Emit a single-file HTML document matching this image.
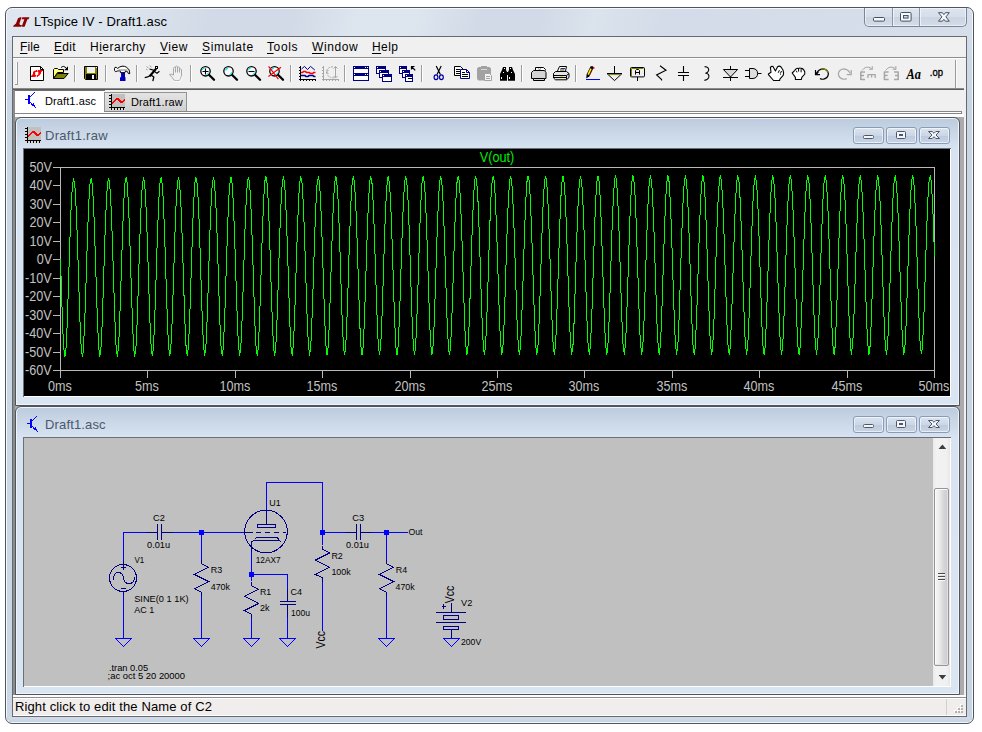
<!DOCTYPE html>
<html lang="en">
<head>
<meta charset="utf-8">
<title>LTspice IV - Draft1.asc</title>
<style>
html,body{margin:0;padding:0;background:#fff;}
body{width:982px;height:732px;overflow:hidden;position:relative;font-family:"Liberation Sans",sans-serif;font-size:12px;color:#000;}
.a{position:absolute;}
.t{position:absolute;white-space:nowrap;line-height:1;}
#win{left:5px;top:7px;width:967px;height:715px;border:1px solid #4f565f;border-radius:7px;
 background:linear-gradient(105deg,#dfe6ef 0,#dce4ee 120px,#d1dae6 200px,#d1dae6 280px,#dde5ef 340px,#dde5ef 400px,#d1dae6 460px,#d1dae6 520px,#dbe3ed 570px,#d3dce8 640px,#d6dfea 100%);
 box-shadow:inset 0 0 0 1px #f4f8fc;}
#client{left:12px;top:36px;width:953px;height:679px;border:1px solid #646a72;background:#f0f0f0;}
.menu span{position:absolute;top:40px;font-size:12px;line-height:14px;white-space:nowrap;}
.menu u{text-decoration:underline;text-decoration-thickness:1px;text-underline-offset:1.5px;}
.sep{position:absolute;width:1px;background:#a0a0a0;top:64px;height:20px;box-shadow:1px 0 0 #fff;}
.child{border:1px solid #50555c;border-radius:6px 6px 0 0;background:linear-gradient(#bccbdd 0,#c7d5e5 12px,#d7e3f1 30px,#dae5f2 100%);box-shadow:inset 0 0 0 1px #eef4fb;}
.cbtn{position:absolute;width:29px;height:15px;border:1px solid #8a9bb8;border-radius:3px;background:linear-gradient(#dbe4f0 0,#cbd6e6 50%,#bccade 51%,#c8d4e5 100%);box-shadow:inset 0 0 0 1px rgba(255,255,255,.6);}
.pl{font-size:14px;color:#c2c2c2;}
.sch text{font-family:"Liberation Sans",sans-serif;font-size:9.3px;fill:#000;}
</style>
</head>
<body>
<div id="win" class="a"></div>
<!-- title -->
<svg class="a" style="left:12px;top:16px" width="18" height="12" viewBox="12 16 18 12"><path d="M13 26.8L13.6 25.6L16 23.6L18 18.2L20.2 17.2H21.6L19.4 23.4L20 25H22L21 26.8ZM22.4 17.2H29.4L28.6 19.2H27.4L24.6 26.8H21.6L24.4 19.2H21.6Z" fill="#8b0000"/></svg>
<div class="t" id="title" style="left:34px;top:14px;font-size:13px;letter-spacing:0.15px;line-height:15px;">LTspice IV - Draft1.asc</div>
<!-- caption buttons -->
<div class="a" style="left:864px;top:8px;width:101px;height:18px;border:1px solid #7b8595;border-top:none;border-radius:0 0 5px 5px;background:linear-gradient(#dde5ef 0,#d5dee9 50%,#cbd5e2 51%,#d3dce8 100%);box-shadow:inset 0 0 0 1px rgba(255,255,255,.55);"></div>
<div class="a" style="left:892px;top:8px;width:1px;height:18px;background:#8c96a6;box-shadow:1px 0 0 rgba(255,255,255,.6)"></div>
<div class="a" style="left:919px;top:8px;width:1px;height:18px;background:#8c96a6;box-shadow:1px 0 0 rgba(255,255,255,.6)"></div>
<svg class="a" style="left:864px;top:8px" width="103" height="19" viewBox="864 8 103 19">
<rect x="873.5" y="17.5" width="11" height="3.6" rx="1" fill="#f6f8fb" stroke="#47505f"/>
<rect x="900.5" y="12.5" width="10.6" height="8.6" rx="1" fill="#f6f8fb" stroke="#47505f"/>
<rect x="903.5" y="15.5" width="4.6" height="2.6" fill="#cfd8e4" stroke="#47505f"/>
<path d="M938.5 12.7H942.4L943.9 14.6L945.4 12.7H949.3L945.9 16.9L949.3 21.2H945.4L943.9 19.3L942.4 21.2H938.5L941.9 16.9Z" fill="#f6f8fb" stroke="#47505f" stroke-linejoin="round"/>
</svg>
<div class="a" style="left:7px;top:40px;width:5px;height:680px;background:linear-gradient(#d6dfea 0,#ccd7e5 60px,#ccd7e5 100%)"></div>
<div class="a" style="left:967px;top:40px;width:5px;height:680px;background:linear-gradient(#d3dce8 0,#cad5e3 60px,#cad5e3 100%)"></div>
<div class="a" style="left:9px;top:717px;width:961px;height:5px;background:linear-gradient(#d2dce9,#c9d4e2)"></div>
<div id="client" class="a"></div>
<!-- menu bar -->
<div class="menu">
<span style="left:20px;letter-spacing:0.1px"><u>F</u>ile</span>
<span style="left:54px;letter-spacing:0.3px"><u>E</u>dit</span>
<span style="left:90px;letter-spacing:0.5px">H<u>i</u>erarchy</span>
<span style="left:160px;letter-spacing:0.5px"><u>V</u>iew</span>
<span style="left:202px;letter-spacing:0.65px"><u>S</u>imulate</span>
<span style="left:267px;letter-spacing:0.6px"><u>T</u>ools</span>
<span style="left:312px;letter-spacing:0.6px"><u>W</u>indow</span>
<span style="left:372px;letter-spacing:0.4px"><u>H</u>elp</span>
</div>
<div class="a" style="left:13px;top:57px;width:953px;height:1px;background:#8d8d8d"></div>
<div class="a" style="left:13px;top:58px;width:953px;height:1px;background:#fff"></div>
<!-- toolbar gripper -->
<div class="a" style="left:17px;top:62px;width:1px;height:23px;background:#9c9c9c"></div><div class="a" style="left:15px;top:84px;width:3px;height:1px;background:#9c9c9c"></div><div class="a" style="left:16px;top:62px;width:1px;height:22px;background:#fbfbfb"></div>
<!-- toolbar right end -->
<div class="a" style="left:955px;top:60px;width:1px;height:28px;background:#9a9a9a"></div><div class="a" style="left:956px;top:60px;width:1px;height:28px;background:#fbfbfb"></div>
<!-- toolbar bottom -->
<div class="a" style="left:13px;top:88px;width:951px;height:1px;background:#8a8a8a"></div>
<div class="a" style="left:13px;top:89px;width:951px;height:1px;background:#5c5c5c"></div>
<!-- left gray band -->
<div class="a" style="left:13px;top:90px;width:2px;height:605px;background:#8c8c8c"></div>
<!-- tabs -->
<div class="a" style="left:15px;top:90px;width:90px;height:23px;background:#fff;border-top:1px solid #6e6e6e;box-sizing:border-box"></div>
<div class="a" style="left:104px;top:92px;width:83px;height:20px;background:linear-gradient(#e4e4e4,#d0d0d0);border:1px solid #939393;box-sizing:border-box"></div>
<div class="a" style="left:15px;top:113px;width:947px;height:1px;background:#85858c"></div>
<div class="a" style="left:104px;top:111px;width:858px;height:1px;background:#85858c"></div>
<div class="a" style="left:104px;top:112px;width:857px;height:1px;background:#fff"></div>
<div class="a" style="left:961px;top:111px;width:1px;height:3px;background:#85858c"></div>
<div class="a" style="left:15px;top:114px;width:949px;height:3px;background:#fdfdfd"></div>
<div class="t" style="left:45px;top:95px;font-size:11px;line-height:13px;letter-spacing:0.1px">Draft1.asc</div>
<div class="t" style="left:131px;top:96px;font-size:11px;line-height:13px;letter-spacing:0.1px">Draft1.raw</div>
<!-- MDI client -->
<div class="a" style="left:15px;top:117px;width:949px;height:578px;background:#ababab"></div>
<!-- status bar -->
<div class="a" style="left:13px;top:695px;width:953px;height:2px;background:#fcfcfc"></div>
<div class="a" style="left:13px;top:697px;width:953px;height:1px;background:#8c8c8c"></div>
<div class="a" style="left:13px;top:698px;width:953px;height:18px;background:#f1eded;border-top:1px solid #fff;border-bottom:1px solid #fff;box-sizing:border-box"></div>
<div class="a" style="left:946px;top:699px;width:1px;height:16px;background:#d2d0ce"></div>
<div class="t" style="left:15px;top:699px;font-size:13px;line-height:15px;letter-spacing:0.12px">Right click to edit the Name of C2</div>
<svg class="a" style="left:953px;top:704px" width="12" height="11" viewBox="0 0 12 11"><g fill="#fff"><rect x="7" y="0" width="2" height="2"/><rect x="4" y="3" width="2" height="2"/><rect x="7" y="3" width="2" height="2"/><rect x="1" y="6" width="2" height="2"/><rect x="4" y="6" width="2" height="2"/><rect x="7" y="6" width="2" height="2"/></g><g fill="#b4b2b0"><rect x="8" y="1" width="2" height="2"/><rect x="5" y="4" width="2" height="2"/><rect x="8" y="4" width="2" height="2"/><rect x="2" y="7" width="2" height="2"/><rect x="5" y="7" width="2" height="2"/><rect x="8" y="7" width="2" height="2"/></g></svg>
<!-- child 1: plot -->
<div class="a child" style="left:15px;top:117px;width:943px;height:287px;"></div>
<div class="t" style="left:45px;top:128px;font-size:13px;line-height:15px;color:#4b576b;letter-spacing:0.3px">Draft1.raw</div>
<div class="cbtn" style="left:853px;top:127px"></div>
<div class="cbtn" style="left:886px;top:127px"></div>
<div class="cbtn" style="left:919px;top:127px"></div>
<div class="a" style="left:23px;top:148px;width:928px;height:249px;background:#fff;border-top:1px solid #6b7078;border-left:1px solid #6b7078;box-sizing:border-box"></div>
<div class="a" id="plot" style="left:24px;top:149px;width:926px;height:247px;background:#000"></div>
<!-- child 2: schematic -->
<div class="a child" style="left:15px;top:406px;width:943px;height:287px;"></div>
<div class="t" style="left:45px;top:417px;font-size:13px;line-height:15px;color:#4b576b;letter-spacing:0.15px">Draft1.asc</div>
<div class="cbtn" style="left:853px;top:416px"></div>
<div class="cbtn" style="left:886px;top:416px"></div>
<div class="cbtn" style="left:919px;top:416px"></div>
<div class="a" style="left:23px;top:437px;width:928px;height:250px;background:#fff;border-top:1px solid #6b7078;border-left:1px solid #6b7078;box-sizing:border-box"></div>
<div class="a" id="sch" style="left:24px;top:438px;width:909px;height:248px;background:#c0c0c0"></div>
<div class="a" id="vsb" style="left:933px;top:438px;width:17px;height:248px;background:#f0f0f0"></div>
<!-- vertical scrollbar -->
<div class="a" style="left:933px;top:438px;width:17px;height:248px;background:linear-gradient(90deg,#e9e9e9 0,#f2f2f2 3px,#f0f0f0 14px,#e6e6e6 17px)"></div>
<div class="a" style="left:934px;top:488px;width:13px;height:176px;border:1px solid #959595;border-radius:2px;background:linear-gradient(90deg,#f6f6f6 0,#ededed 4px,#d9d9dc 8px,#c9c9cf 13px);box-shadow:inset 1px 1px 0 #fbfbfb,inset -1px -1px 0 #e2e2e6"></div>
<svg class="a" style="left:933px;top:438px" width="17" height="248" viewBox="933 438 17 248">
<path d="M938.6 449L942.4 444.6L946.2 449Z" fill="#3d3d3d"/>
<path d="M938.6 675L942.4 679.4L946.2 675Z" fill="#3d3d3d"/>
<g shape-rendering="crispEdges"><rect x="938" y="573" width="7" height="1" fill="#4a4a4a"/><rect x="938" y="576" width="7" height="1" fill="#4a4a4a"/><rect x="938" y="579" width="7" height="1" fill="#4a4a4a"/>
<rect x="938" y="574" width="7" height="1" fill="#f8f8f8"/><rect x="938" y="577" width="7" height="1" fill="#f8f8f8"/><rect x="938" y="580" width="7" height="1" fill="#f8f8f8"/></g>
</svg>
<!-- icon defs -->
<svg width="0" height="0" style="position:absolute">
<defs>
<g id="icoPlot" shape-rendering="crispEdges">
<rect x="0" y="0" width="16" height="16" fill="#d9d9d9"/>
<rect x="3" y="0" width="13" height="13" fill="#c0c0c0"/>
<path d="M2.5 0V16M0 13.5H16M0 1.5H2M0 4.5H2M0 7.5H2M0 10.5H2M5.5 14V16M8.5 14V16M11.5 14V16M14.5 14V16" stroke="#000" stroke-width="1" fill="none"/>
<path d="M3 8h1v-1h1v-1h1v-1h1v-1h3v1h1v1h1v1h2v-1h1v-1h1v-1h1v2h-1v1h-1v1h-1v1h-3v-1h-1v-1h-1v-1h-2v1h-1v1h-1v1h-1v1h-1z" fill="#ff0000"/>
</g>
<g id="icoBjt" shape-rendering="crispEdges" fill="#0000ff">
<rect x="0" y="7" width="3" height="1"/><rect x="3" y="3" width="2" height="9"/>
<rect x="5" y="4" width="1" height="1"/><rect x="6" y="3" width="1" height="1"/><rect x="7" y="2" width="1" height="1"/><rect x="8" y="1" width="1" height="1"/><rect x="9" y="0" width="1" height="1"/>
<rect x="5" y="10" width="1" height="1"/><rect x="6" y="11" width="1" height="1"/><rect x="7" y="12" width="2" height="1"/><rect x="8" y="11" width="1" height="3"/><rect x="7" y="13" width="3" height="1"/><rect x="9" y="14" width="1" height="1"/><rect x="10" y="15" width="1" height="1"/><rect x="6" y="12" width="1" height="1"/>
</g>
<g id="gMin"><rect x="10.5" y="8.5" width="10" height="3" rx="1" fill="#f3f5f8" stroke="#4e576a"/></g>
<g id="gMax"><rect x="10.5" y="4.5" width="9" height="7" rx="1" fill="#f3f5f8" stroke="#4e576a"/><rect x="13.5" y="7.5" width="3" height="1" fill="#c6d0df" stroke="#4e576a"/></g>
<g id="gCls"><path d="M9.5 4.5H13.2L15 6.3L16.8 4.5H20.5L17 8L20.5 11.5H16.8L15 9.7L13.2 11.5H9.5L13 8Z" fill="#f3f5f8" stroke="#4e576a" stroke-width="1"/></g>
</defs>
</svg>
<svg class="a" style="left:25px;top:127px" width="16" height="16"><use href="#icoPlot"/></svg>
<svg class="a" style="left:27px;top:416px" width="16" height="16"><use href="#icoBjt"/></svg>
<svg class="a" style="left:853px;top:127px" width="30" height="17"><use href="#gMin"/></svg>
<svg class="a" style="left:886px;top:127px" width="30" height="17"><use href="#gMax"/></svg>
<svg class="a" style="left:919px;top:127px" width="30" height="17"><use href="#gCls"/></svg>
<svg class="a" style="left:853px;top:416px" width="30" height="17"><use href="#gMin"/></svg>
<svg class="a" style="left:886px;top:416px" width="30" height="17"><use href="#gMax"/></svg>
<svg class="a" style="left:919px;top:416px" width="30" height="17"><use href="#gCls"/></svg>
<!-- tab icons -->
<svg class="a" style="left:25px;top:92px" width="16" height="16"><use href="#icoBjt"/></svg>
<svg class="a" style="left:109px;top:94px" width="16" height="16"><use href="#icoPlot"/></svg>
<!-- toolbar icons -->
<svg class="a" style="left:0;top:58px" width="982" height="30" viewBox="0 58 982 30">
<g shape-rendering="crispEdges" stroke="none">
 <g fill="#9d9d9d"><rect x="74" y="65" width="1" height="17"/><rect x="105" y="65" width="1" height="17"/><rect x="136" y="65" width="1" height="17"/><rect x="190" y="65" width="1" height="17"/><rect x="290" y="65" width="1" height="17"/><rect x="344" y="65" width="1" height="17"/><rect x="421" y="65" width="1" height="17"/><rect x="521" y="65" width="1" height="17"/><rect x="575" y="65" width="1" height="17"/></g>
 <g fill="#ffffff"><rect x="75" y="65" width="1" height="17"/><rect x="106" y="65" width="1" height="17"/><rect x="137" y="65" width="1" height="17"/><rect x="191" y="65" width="1" height="17"/><rect x="291" y="65" width="1" height="17"/><rect x="345" y="65" width="1" height="17"/><rect x="422" y="65" width="1" height="17"/><rect x="522" y="65" width="1" height="17"/><rect x="576" y="65" width="1" height="17"/></g>
</g>
<!-- new -->
<path d="M30.5 66.5H40.5L43.5 69.5V80.5H30.5Z" fill="#fff" stroke="#000"/>
<path d="M40.5 66.5V69.5H43.5" fill="none" stroke="#000"/>
<path d="M31 77V76L33 74V72L34 71L36 70.6V70H37V72H35.2V75H36.2V76L35.2 77ZM38 70H43V71H42.2L41 72.6V73.4L40 74.4L39.4 75.6L39 76H38V77H36.9V75.4L38.3 74.6V72H37.5V71Z" fill="#ff0000"/>
<!-- open -->
<path d="M53.5 78.5V69.5L54.5 68.5H57.5L58.5 69.5H63.5V72.5H57.5L53.5 78.5Z" fill="#ffff7a" stroke="#000"/>
<path d="M53.5 78.5L57.5 73.5H68.2L64 78.5Z" fill="#808000" stroke="#000"/>
<path d="M61 67.6Q63.6 64.8 66.6 68.6" fill="none" stroke="#000"/>
<path d="M68 66.2V70.2H64.2Z" fill="#000"/>
<!-- save -->
<path d="M84.5 66.5H97.5V79.5H85.5L84.5 78.5Z" fill="#808000" stroke="#000"/>
<rect x="87" y="67" width="8" height="6" fill="#f0f0f0"/>
<rect x="86" y="74" width="10" height="6" fill="#000"/>
<rect x="92" y="75" width="2" height="4" fill="#f0f0f0"/>
<rect x="96" y="67" width="1" height="1" fill="#f0f0f0"/>
<!-- hammer -->
<path d="M114.5 68.4Q114.6 66.8 116.2 67.4L117.6 68.4Q122 64.6 126.6 67.2Q130 69.4 129.8 73.6L128.4 73.6Q128 71.2 125.6 70.8L125 72.6H120.4L120.2 70.6L117.6 71Q114.8 72.6 114.5 70.4Z" fill="#fff" stroke="#000"/>
<path d="M118.5 70H127.5" stroke="#a0a0a0" stroke-width="1.4" fill="none"/>
<path d="M121 73H125V77L125.5 77.5V81H120V77.5L121 77Z" fill="#0000b0"/>
<rect x="121" y="73" width="1" height="8" fill="#0000ff"/>
<!-- runner -->
<g fill="none" stroke="#000" stroke-linecap="square">
<rect x="155" y="66" width="3" height="3" fill="#000" stroke="none"/>
<path d="M155.4 69.6L150.4 75.4" stroke-width="2.2"/>
<path d="M154 71.2L157 73.2L159 71.6" stroke-width="1.1"/>
<path d="M153.6 70.2L150 69.2" stroke-width="1.1"/>
<path d="M151 75L153.8 77L153 80.5" stroke-width="1.3"/>
<path d="M150 75.6L147.6 77L145.4 77.4" stroke-width="1.3"/>
</g>
<path d="M146.5 66.5L148.5 68M149.5 65.6L151.5 67.2M146 69L147.4 70" stroke="#9a9a9a" fill="none"/>
<rect x="156" y="67" width="1" height="1" fill="#fff"/>
<!-- hand disabled -->
<g fill="none" stroke="#a6a6a6">
<path d="M173.5 75V68.5Q173.5 67.4 174.5 67.4Q175.5 67.4 175.5 68.5V72.5M175.5 68V66.6Q176.5 65.6 177.5 66.6V72.5M177.5 67.6Q178.5 66.6 179.5 67.6V72.5M179.5 69.4Q180.5 68.4 181.5 69.6V75.5Q181.4 78 179.5 80.5H174.5Q172 77 169.5 74.6Q170.8 73 173.5 75.2"/>
</g>
<path d="M174.5 81.3H180.2L182.3 76.5" stroke="#fff" fill="none"/>
<!-- magnifiers -->
<g id="mag"><circle cx="205.5" cy="71.3" r="4.7" fill="#fbfbfb" stroke="#000" stroke-width="1.3"/><path d="M209.2 75L214 79.8" stroke="#000" stroke-width="2.3" stroke-linecap="round"/></g>
<use href="#mag" x="23"/><use href="#mag" x="46"/><use href="#mag" x="69"/>
<path d="M202.2 69.6Q203.2 68 204.6 67.8M208.8 72.8Q208 74.2 206.6 74.8" stroke="#00e0e8" stroke-width="1.2" fill="none"/>
<path d="M202.5 71.5H208.5M205.5 68.5V74.5" stroke="#000" stroke-width="1.1" fill="none"/>
<path d="M225.6 70.4Q226.4 68.2 228 67.8M231.8 72.4Q231.2 74.2 229.6 74.8" stroke="#00e0e8" stroke-width="1.3" fill="none"/>
<path d="M248.2 69.6Q249.2 68 250.6 67.8M254.8 72.8Q254 74.2 252.6 74.8" stroke="#00e0e8" stroke-width="1.2" fill="none"/>
<path d="M248.5 71.5H254.5" stroke="#000" stroke-width="1.1" fill="none"/>
<path d="M271.4 70Q272.4 68 274 67.8M277.6 72.6Q277 74.2 275.6 74.8" stroke="#00e0e8" stroke-width="1.2" fill="none"/>
<path d="M268.6 66.4L278.4 79.2M281 67.2L268.4 76.6" stroke="#ff0000" stroke-width="1.2" fill="none"/>
<!-- wave1 -->
<g shape-rendering="crispEdges" fill="#000"><rect x="300" y="66" width="1" height="15"/><rect x="299" y="79" width="17" height="1"/><rect x="299" y="67" width="1" height="1"/><rect x="299" y="70" width="1" height="1"/><rect x="299" y="73" width="1" height="1"/><rect x="299" y="76" width="1" height="1"/><rect x="303" y="80" width="1" height="1"/><rect x="306" y="80" width="1" height="1"/><rect x="309" y="80" width="1" height="1"/><rect x="312" y="80" width="1" height="1"/><rect x="315" y="80" width="1" height="1"/></g>
<path d="M301.5 69L304.5 66.4L307.5 69.6L310.5 66.4L314.8 70" stroke="#000090" fill="none"/>
<path d="M301 72.6H302.6L303.4 71.6H305.6L306.6 72.6H309.4L310.4 73.6H312.6L313.6 72.6H315.5" stroke="#ff0000" stroke-width="1.5" fill="none"/>
<path d="M301 75.6H305L306 76.6H308L309 75.6H313L314 76.6H315.5" stroke="#000090" stroke-width="1.5" fill="none"/>
<!-- wave2 disabled -->
<g shape-rendering="crispEdges" fill="#a6a6a6"><rect x="323" y="66" width="1" height="15"/><rect x="322" y="79" width="17" height="1"/><rect x="322" y="67" width="1" height="1"/><rect x="322" y="70" width="1" height="1"/><rect x="322" y="73" width="1" height="1"/><rect x="322" y="76" width="1" height="1"/><rect x="326" y="80" width="1" height="1"/><rect x="329" y="80" width="1" height="1"/><rect x="332" y="80" width="1" height="1"/><rect x="335" y="80" width="1" height="1"/><rect x="338" y="80" width="1" height="1"/></g>
<path d="M333 66.8Q327 67 326.5 72Q327 77.6 334 78" stroke="#a6a6a6" fill="none" stroke-dasharray="2 1"/>
<path d="M328.5 70L326.5 72L328.5 74M335.5 66.5V78M333.5 68.5L335.5 66.5L337.5 68.5M333.5 76L335.5 78L337.5 76" stroke="#a6a6a6" fill="none"/>
<!-- tile -->
<g shape-rendering="crispEdges"><rect x="353" y="66" width="16" height="15" fill="#000080"/><rect x="354" y="69" width="14" height="4" fill="#fff"/><rect x="354" y="76" width="14" height="4" fill="#fff"/>
<g fill="#fff"><rect x="354" y="67" width="1" height="1"/><rect x="365" y="67" width="1" height="1"/><rect x="367" y="67" width="1" height="1"/><rect x="354" y="74" width="1" height="1"/><rect x="365" y="74" width="1" height="1"/><rect x="367" y="74" width="1" height="1"/></g>
<!-- cascade -->
<g id="cw"><rect x="376" y="66" width="10" height="8" fill="#000080"/><rect x="377" y="69" width="8" height="4" fill="#fff"/><rect x="377" y="67" width="1" height="1" fill="#fff"/></g>
<use href="#cw" x="3" y="4"/><use href="#cw" x="6" y="8"/>
<!-- cascade2 -->
<g id="cw2"><rect x="399" y="66" width="8" height="8" fill="#000080"/><rect x="400" y="69" width="6" height="4" fill="#fff"/><rect x="400" y="67" width="1" height="1" fill="#fff"/></g>
<use href="#cw2" x="3" y="4"/><use href="#cw2" x="6" y="8"/>
<rect x="408" y="78" width="4" height="1" fill="#000"/>
</g>
<path d="M411.5 69.5V66.5H414.5M412 67L415.2 70.4" stroke="#000" stroke-width="1.2" fill="none"/>
<!-- scissors -->
<path d="M436.2 66L440.4 74.6M441.2 66L437 74.6" stroke="#000" stroke-width="1.2" fill="none"/>
<ellipse cx="436" cy="77.2" rx="1.9" ry="2.4" fill="none" stroke="#0000a8" stroke-width="1.2"/>
<ellipse cx="441.4" cy="77.2" rx="1.9" ry="2.4" fill="none" stroke="#0000a8" stroke-width="1.2"/>
<!-- copy -->
<path d="M454.5 66.5H460.5L463.5 69.5V75.5H454.5Z" fill="#fff" stroke="#000"/>
<path d="M456 69.5H460M456 71.5H461M456 73.5H461" stroke="#000" fill="none"/>
<path d="M460.5 69.5H466.5L469.5 72.5V78.5H460.5Z" fill="#fff" stroke="#000080"/>
<path d="M466.5 69.5V72.5H469.5" fill="none" stroke="#000080"/>
<path d="M462 72.5H465M462 74.5H468M462 76.5H468" stroke="#000" fill="none"/>
<!-- paste disabled -->
<rect x="477.5" y="67.5" width="13" height="12.5" rx="1.5" fill="#a2a2a2" stroke="#a2a2a2"/>
<rect x="481" y="66" width="6" height="2" fill="#a2a2a2"/>
<path d="M481 69.5H487" stroke="#d8d8d8"/>
<path d="M484.5 73.5H489.5L491.5 75.5V80.5H484.5Z" fill="#f4f4f4" stroke="#a2a2a2"/>
<path d="M486 76.5H490M486 78.5H490" stroke="#a2a2a2"/>
<!-- binoculars -->
<path d="M503 67H506V70L507 72V80.8H500V74L502 70ZM509 67H512L513 70L515 74V80.8H508V72L509 70ZM506 72H509V75H506Z" fill="#000"/>
<g fill="#fff"><rect x="504" y="68" width="1" height="1"/><rect x="510" y="68" width="1" height="1"/><rect x="501" y="77" width="1" height="2"/><rect x="509" y="77" width="1" height="2"/><rect x="503" y="72" width="1" height="1"/><rect x="511" y="72" width="1" height="1"/></g>
<!-- print setup -->
<path d="M535.5 70.5V67.5H543.5L545.5 69.5V70.5" fill="#fff" stroke="#000"/>
<path d="M533.5 70.5H544.5L546 72.5V78.5H544.5V80.5H533.5V78.5H531.5V72.5Z" fill="#d4d4d4" stroke="#000"/>
<path d="M533.5 78.5H544.5" stroke="#000"/><path d="M538 68.5L539.5 69.5L541 68.5" stroke="#808080" fill="none"/>
<!-- print -->
<path d="M557.5 71L559.5 66.5H566.5L565.5 71" fill="#fff" stroke="#000"/>
<path d="M560.5 68.5H565M560 70H564.5" stroke="#000" stroke-width=".8"/>
<path d="M555.5 71.5H566.5L569 73.5V77.5L566.5 79.8H555.5L553.5 78V73.5Z" fill="#e4e4e4" stroke="#000"/>
<path d="M553.5 75.5H566.5L569 73.5M566.5 75.5V79.5M553.5 77.5H566.5" stroke="#000" fill="none"/>
<rect x="560" y="76" width="3" height="1" fill="#e8e000"/>
<!-- pencil -->
<path d="M586.2 78.6L586.6 74.6L590.6 66.2H593.2V68.4L589.4 76.2Z" fill="#000"/>
<path d="M588.2 74.6L591 68.6" stroke="#ffff00" stroke-width="1.5" fill="none"/>
<path d="M589.6 75L592.2 69.6" stroke="#ff0000" stroke-width="1" stroke-dasharray="1 1" fill="none"/>
<rect x="593" y="67" width="1.4" height="1.8" fill="#ff0000"/>
<rect x="586" y="79" width="14" height="1" fill="#0000ff" shape-rendering="crispEdges"/>
<!-- ground -->
<path d="M614.5 66V73.5" stroke="#000"/>
<path d="M607 73.5H622L614.5 80.6Z" fill="#f0f0f0" stroke="#000"/>
<path d="M609 74.6H620" stroke="#808000"/>
<!-- label -->
<rect x="630.5" y="67.5" width="14" height="9.4" rx="1" fill="#f0f0f0" stroke="#000"/>
<path d="M631.5 76V68.5H643.5" stroke="#808000" fill="none"/>
<path d="M637.5 77V81" stroke="#000"/>
<path d="M635.5 74.6V70.5L636.5 69.5H638.5L639.5 70.5V74.6M635.5 72.5H639.5" stroke="#000" fill="none"/>
<!-- resistor -->
<path d="M660 65.8L666 70.2L656.6 75L661.6 79.6V80.6" stroke="#000" stroke-width="1.1" fill="none"/>
<!-- cap -->
<path d="M683.5 66V72M683.5 75V81M678 72.5H689M678 75.5H689" stroke="#000" stroke-width="1.1" fill="none"/>
<!-- inductor -->
<path d="M704.6 66.6Q709.4 67 708.6 70.6Q707.8 73 705.4 73.2Q709.6 73.6 708.8 77.4Q707.8 80 704.4 80.4" stroke="#000" stroke-width="1.1" fill="none"/>
<!-- diode -->
<path d="M730.5 66V81" stroke="#000"/>
<path d="M723.4 69.5H737.6L730.5 77Z" fill="#d8d8d8" stroke="#000"/>
<path d="M723 77.5H738" stroke="#000"/>
<!-- and gate -->
<path d="M749.5 68.5H753Q757.6 69 757.6 73.5Q757.6 78 753 78.5H749.5Z" fill="#dedede" stroke="#000"/>
<path d="M745 70.5H749.5M745 76.5H749.5M757.6 73.5H761.5" stroke="#000"/>
<!-- hand open -->
<path d="M768.4 74L771 72.2L770.4 67.4Q771.6 65.8 773 66.6L775.4 71L777.6 66.8Q779.4 65.4 781 67L783 70Q784 72.6 783.2 75.4L780 78.8L779.6 80.5H773.6L768.4 74.6Z" fill="#fff" stroke="#000" stroke-width="1.1" stroke-linejoin="round"/>
<path d="M778.2 72.8L779.4 70.2M780.3 73.6L781.5 71" stroke="#000" stroke-width="1" fill="none"/>
<rect x="780" y="74" width="1" height="1" fill="#00a0b0"/>
<!-- hand closed -->
<path d="M792.2 73L794.6 70.6L796 68.9Q797.4 67.8 798.6 68.4Q800 67.6 801.2 68.4Q803 68.6 803.8 70Q805.2 71.4 804.8 74L801.8 77.4L801.4 79.5H795.4V77.4Z" fill="#fff" stroke="#000" stroke-width="1.1" stroke-linejoin="round"/>
<path d="M798.6 68.8V71.6M801.1 69.1V72.3M796.4 70.8L797 72.4" stroke="#000" stroke-width="1" fill="none"/>
<!-- undo -->
<path d="M816.4 73.6Q818.4 69.2 822.8 68.8Q827.6 69 828.4 73.6Q828.2 78 823.6 79.2Q821.4 79.4 820 78.4" stroke="#000" stroke-width="1.2" fill="none"/>
<path d="M821 69.1Q826.2 68.2 828 72.4" stroke="#808000" stroke-width="1.2" fill="none"/>
<path d="M815.5 70V74.6H820M815.8 74.4L818.4 72" stroke="#000" stroke-width="1.2" fill="none"/><path d="M815.6 72V74.6H818.4Z" fill="#000"/>
<!-- redo disabled -->
<g transform="translate(1666.75 0) scale(-1 1)" stroke="#a8a8a8" fill="none" stroke-width="1.2">
<path d="M816.4 73.6Q818.4 69.2 822.8 68.8Q827.6 69 828.4 73.6Q828.2 78 823.6 79.2Q821.4 79.4 820 78.4"/>
<path d="M815.5 70V74.6H820"/>
</g>
<!-- rotate disabled -->
<g stroke="#a6a6a6" fill="none">
<path d="M862 70.4Q866 65 871.6 68.4" />
<path d="M872.2 66L872.4 69.4L869 69.2"/>
<path d="M860.8 71.5V80M860.8 72H865M860.8 75.6H864M860.8 79.6H865" stroke-width="1.5"/>
<path d="M867.6 74.6H875.6M868 74.6V78M871.6 74.6V77.4M875.2 74.6V78" stroke-width="1.3"/>
<!-- mirror disabled -->
<path d="M885.6 70.4Q889.6 65 895.2 68.4" />
<path d="M895.8 66L896 69.4L892.6 69.2"/>
<path d="M884.4 71.5V80M884.4 72H888.6M884.4 75.6H887.6M884.4 79.6H888.6" stroke-width="1.5"/>
<path d="M898.2 71.5V80M898.2 72H894M898.2 75.6H895M898.2 79.6H894" stroke-width="1.5"/>
</g>
<text x="906.6" y="78.6" font-family="Liberation Serif,serif" font-weight="bold" font-style="italic" font-size="14.5" textLength="14.4" lengthAdjust="spacingAndGlyphs">Aa</text>
<text x="929.8" y="75.9" font-family="Liberation Sans,sans-serif" font-size="11.5" textLength="13.2" lengthAdjust="spacingAndGlyphs" stroke="#000" stroke-width=".35">.op</text>
</svg>
<!-- plot -->
<svg class="a" style="left:24px;top:149px" width="926" height="247" viewBox="0 0 926 247"><path d="M29 18.5H911M29 221.5H911M36.5 18V229M910.5 18V229M29 36.5H36M29 55.5H36M29 73.5H36M29 92.5H36M29 110.5H36M29 129.5H36M29 147.5H36M29 166.5H36M29 184.5H36M29 203.5H36M123.5 221V229M211.5 221V229M298.5 221V229M386.5 221V229M473.5 221V229M560.5 221V229M648.5 221V229M735.5 221V229M823.5 221V229" stroke="#b9b9b9" stroke-width="1" fill="none" shape-rendering="crispEdges"/><path d="M36.5 110V127M37.5 127V158M38.5 158V185M39.5 185V201M40.5 201V208M41.5 199V207M42.5 179V199M43.5 150V179M44.5 118V150M45.5 88V118M46.5 61V88M47.5 43V61M48.5 33V43M49.5 29V33M50.5 32V39M51.5 39V57M52.5 57V81M53.5 81V111M54.5 111V143M55.5 143V173M56.5 173V195M57.5 195V205M58.5 204V208M59.5 187V204M60.5 164V187M61.5 134V164M62.5 102V134M63.5 73V102M64.5 50V73M65.5 35V50M66.5 30V35M67.5 29V34M68.5 34V47M69.5 47V68M70.5 68V97M71.5 97V128M72.5 128V159M73.5 159V184M74.5 184V201M75.5 201V208M76.5 198V206M77.5 178V198M78.5 149V178M79.5 117V149M80.5 86V117M81.5 61V86M82.5 42V61M83.5 32V42M84.5 29V32M85.5 31V40M86.5 40V57M87.5 57V82M88.5 82V112M89.5 112V144M90.5 144V173M91.5 173V196M92.5 196V205M93.5 202V208M94.5 188V202M95.5 162V188M96.5 132V162M97.5 101V132M98.5 72V101M99.5 49V72M100.5 34V49M101.5 29V34M102.5 28V33M103.5 33V48M104.5 48V69M105.5 69V97M106.5 97V129M107.5 129V159M108.5 159V185M109.5 185V202M110.5 202V208M111.5 197V205M112.5 176V197M113.5 147V176M114.5 115V147M115.5 85V115M116.5 59V85M117.5 41V59M118.5 32V41M119.5 28V32M120.5 31V40M121.5 40V58M122.5 58V83M123.5 83V113M124.5 113V145M125.5 145V174M126.5 174V195M127.5 195V205M128.5 202V207M129.5 186V202M130.5 161V186M131.5 131V161M132.5 99V131M133.5 71V99M134.5 48V71M135.5 34V48M136.5 29V34M137.5 28V34M138.5 34V47M139.5 47V70M140.5 70V98M141.5 98V130M142.5 130V160M143.5 160V186M144.5 186V201M145.5 201V207M146.5 195V205M147.5 175V195M148.5 146V175M149.5 114V146M150.5 83V114M151.5 57V83M152.5 40V57M153.5 31V40M154.5 28V31M155.5 31V41M156.5 41V58M157.5 58V84M158.5 84V114M159.5 114V147M160.5 146V175M161.5 175V197M162.5 196V205M163.5 201V207M164.5 185V201M165.5 160V185M166.5 129V160M167.5 98V129M168.5 69V98M169.5 48V69M170.5 33V48M171.5 28V33M172.5 29V34M173.5 34V48M174.5 48V70M175.5 70V99M176.5 99V131M177.5 131V162M178.5 162V186M179.5 186V201M180.5 201V207M181.5 195V204M182.5 173V195M183.5 144V173M184.5 112V144M185.5 81V112M186.5 57V81M187.5 39V57M188.5 31V39M189.5 28V31M190.5 31V42M191.5 42V59M192.5 59V84M193.5 84V115M194.5 115V147M195.5 147V176M196.5 176V197M197.5 197V205M198.5 201V207M199.5 183V201M200.5 159V183M201.5 127V159M202.5 97V127M203.5 68V97M204.5 46V68M205.5 34V46M206.5 28V34M207.5 28V34M208.5 34V49M209.5 49V72M210.5 72V100M211.5 100V132M212.5 132V162M213.5 162V187M214.5 187V201M215.5 201V207M216.5 194V204M217.5 172V194M218.5 143V172M219.5 111V143M220.5 80V111M221.5 56V80M222.5 39V56M223.5 30V39M224.5 28V31M225.5 31V41M226.5 41V60M227.5 60V86M228.5 86V116M229.5 116V148M230.5 148V177M231.5 177V197M232.5 197V205M233.5 201V207M234.5 183V201M235.5 157V183M236.5 126V157M237.5 94V126M238.5 67V94M239.5 45V67M240.5 31V45M241.5 27V32M242.5 28V34M243.5 34V49M244.5 49V72M245.5 72V101M246.5 101V133M247.5 133V163M248.5 163V187M249.5 187V202M250.5 202V207M251.5 193V204M252.5 171V193M253.5 141V171M254.5 109V141M255.5 79V109M256.5 55V79M257.5 38V55M258.5 30V38M259.5 27V31M260.5 31V41M261.5 41V61M262.5 61V87M263.5 87V117M264.5 117V149M265.5 149V178M266.5 178V198M267.5 198V205M268.5 199V207M269.5 182V199M270.5 156V182M271.5 124V156M272.5 93V124M273.5 66V93M274.5 44V66M275.5 32V44M276.5 27V32M277.5 29V34M278.5 34V50M279.5 50V73M280.5 73V102M281.5 102V134M282.5 134V165M283.5 165V188M284.5 188V201M285.5 201V207M286.5 192V203M287.5 169V192M288.5 140V169M289.5 108V140M290.5 78V108M291.5 54V78M292.5 36V54M293.5 30V36M294.5 27V31M295.5 31V42M296.5 42V62M297.5 62V88M298.5 88V119M299.5 119V150M300.5 150V177M301.5 177V197M302.5 197V206M303.5 199V206M304.5 181V199M305.5 154V181M306.5 123V154M307.5 92V123M308.5 64V92M309.5 44V64M310.5 32V44M311.5 27V32M312.5 28V36M313.5 36V50M314.5 50V74M315.5 74V103M316.5 103V135M317.5 135V166M318.5 166V188M319.5 188V202M320.5 202V206M321.5 191V203M322.5 168V191M323.5 139V168M324.5 106V139M325.5 77V106M326.5 52V77M327.5 36V52M328.5 29V36M329.5 27V31M330.5 31V43M331.5 43V62M332.5 62V89M333.5 89V120M334.5 120V151M335.5 151V180M336.5 179V198M337.5 198V206M338.5 199V206M339.5 180V199M340.5 153V180M341.5 122V153M342.5 91V122M343.5 64V91M344.5 44V64M345.5 31V44M346.5 27V31M347.5 29V35M348.5 34V51M349.5 51V75M350.5 75V105M351.5 105V136M352.5 136V166M353.5 166V190M354.5 190V202M355.5 202V206M356.5 190V202M357.5 167V190M358.5 137V167M359.5 105V137M360.5 75V105M361.5 52V75M362.5 36V52M363.5 28V36M364.5 27V32M365.5 32V43M366.5 43V63M367.5 63V90M368.5 90V121M369.5 121V153M370.5 153V179M371.5 179V199M372.5 199V206M373.5 198V206M374.5 178V198M375.5 152V178M376.5 120V152M377.5 89V120M378.5 63V89M379.5 43V63M380.5 31V43M381.5 27V31M382.5 29V36M383.5 36V51M384.5 51V76M385.5 76V106M386.5 106V138M387.5 138V168M388.5 168V190M389.5 190V202M390.5 202V206M391.5 189V202M392.5 165V189M393.5 136V165M394.5 104V136M395.5 74V104M396.5 51V74M397.5 34V51M398.5 28V34M399.5 27V32M400.5 32V43M401.5 43V64M402.5 64V91M403.5 91V122M404.5 122V154M405.5 154V181M406.5 181V198M407.5 198V206M408.5 197V205M409.5 178V197M410.5 150V178M411.5 119V150M412.5 88V119M413.5 62V88M414.5 42V62M415.5 31V42M416.5 27V31M417.5 29V36M418.5 36V52M419.5 52V77M420.5 77V107M421.5 107V139M422.5 139V169M423.5 169V190M424.5 190V203M425.5 202V206M426.5 188V202M427.5 164V188M428.5 134V164M429.5 102V134M430.5 73V102M431.5 49V73M432.5 33V49M433.5 28V34M434.5 27V31M435.5 31V44M436.5 44V65M437.5 65V92M438.5 92V123M439.5 123V154M440.5 154V182M441.5 182V198M442.5 198V206M443.5 197V205M444.5 178V197M445.5 149V178M446.5 117V150M447.5 86V117M448.5 61V86M449.5 41V61M450.5 30V41M451.5 27V30M452.5 29V37M453.5 37V53M454.5 52V78M455.5 78V108M456.5 108V140M457.5 140V169M458.5 169V191M459.5 191V203M460.5 201V206M461.5 187V201M462.5 163V187M463.5 133V163M464.5 101V133M465.5 71V101M466.5 48V72M467.5 34V48M468.5 28V34M469.5 27V31M470.5 31V44M471.5 44V66M472.5 66V93M473.5 93V125M474.5 125V156M475.5 156V182M476.5 182V198M477.5 198V206M478.5 196V204M479.5 176V196M480.5 148V176M481.5 116V148M482.5 85V116M483.5 59V85M484.5 41V59M485.5 30V41M486.5 27V30M487.5 29V37M488.5 37V55M489.5 55V79M490.5 79V109M491.5 109V141M492.5 141V171M493.5 171V191M494.5 191V203M495.5 201V206M496.5 187V201M497.5 161V187M498.5 132V161M499.5 100V132M500.5 71V100M501.5 48V71M502.5 32V48M503.5 27V33M504.5 27V31M505.5 31V45M506.5 45V67M507.5 67V94M508.5 94V126M509.5 126V156M510.5 156V182M511.5 182V199M512.5 199V206M513.5 196V204M514.5 175V196M515.5 147V175M516.5 115V147M517.5 84V115M518.5 58V84M519.5 40V58M520.5 30V40M521.5 27V30M522.5 29V38M523.5 38V55M524.5 55V80M525.5 80V110M526.5 110V142M527.5 142V171M528.5 171V193M529.5 193V203M530.5 200V206M531.5 186V200M532.5 160V186M533.5 130V160M534.5 99V130M535.5 70V99M536.5 46V70M537.5 33V47M538.5 27V33M539.5 27V33M540.5 33V46M541.5 46V68M542.5 68V95M543.5 95V127M544.5 127V158M545.5 158V183M546.5 183V199M547.5 199V206M548.5 195V203M549.5 174V196M550.5 145V175M551.5 113V145M552.5 83V113M553.5 57V83M554.5 39V57M555.5 30V39M556.5 27V30M557.5 30V38M558.5 38V56M559.5 56V81M560.5 81V111M561.5 111V143M562.5 143V172M563.5 172V194M564.5 194V203M565.5 200V206M566.5 184V200M567.5 160V184M568.5 129V160M569.5 97V129M570.5 68V97M571.5 46V68M572.5 32V46M573.5 27V32M574.5 27V32M575.5 32V46M576.5 46V68M577.5 68V97M578.5 97V128M579.5 128V159M580.5 159V184M581.5 184V199M582.5 199V206M583.5 194V204M584.5 173V194M585.5 144V173M586.5 112V144M587.5 81V112M588.5 57V81M589.5 39V57M590.5 29V39M591.5 26V29M592.5 29V39M593.5 39V57M594.5 57V82M595.5 82V113M596.5 113V144M597.5 144V173M598.5 173V195M599.5 195V203M600.5 199V206M601.5 184V199M602.5 158V184M603.5 128V158M604.5 96V128M605.5 67V96M606.5 46V67M607.5 32V46M608.5 26V32M609.5 27V33M610.5 33V46M611.5 46V69M612.5 69V98M613.5 98V129M614.5 129V160M615.5 160V186M616.5 186V199M617.5 199V206M618.5 193V203M619.5 172V193M620.5 143V172M621.5 111V143M622.5 81V111M623.5 55V81M624.5 37V55M625.5 29V37M626.5 26V30M627.5 30V39M628.5 39V58M629.5 58V83M630.5 83V114M631.5 114V146M632.5 146V175M633.5 175V194M634.5 194V204M635.5 199V206M636.5 183V199M637.5 157V183M638.5 126V157M639.5 95V126M640.5 67V95M641.5 45V67M642.5 32V45M643.5 26V32M644.5 27V33M645.5 32V48M646.5 48V70M647.5 70V99M648.5 99V131M649.5 131V161M650.5 161V186M651.5 186V200M652.5 200V206M653.5 193V202M654.5 171V193M655.5 141V171M656.5 109V141M657.5 79V109M658.5 54V79M659.5 37V54M660.5 29V37M661.5 26V30M662.5 30V40M663.5 40V58M664.5 58V84M665.5 84V115M666.5 115V147M667.5 147V175M668.5 175V196M669.5 196V204M670.5 200V206M671.5 181V200M672.5 156V181M673.5 125V156M674.5 94V125M675.5 66V94M676.5 45V66M677.5 32V45M678.5 26V32M679.5 27V33M680.5 33V48M681.5 48V71M682.5 71V100M683.5 100V132M684.5 132V162M685.5 162V187M686.5 187V200M687.5 200V206M688.5 191V203M689.5 170V191M690.5 140V170M691.5 108V140M692.5 78V108M693.5 53V78M694.5 37V53M695.5 28V37M696.5 26V30M697.5 30V41M698.5 41V59M699.5 59V85M700.5 85V116M701.5 116V148M702.5 148V176M703.5 176V196M704.5 196V204M705.5 200V206M706.5 181V200M707.5 155V181M708.5 124V155M709.5 93V124M710.5 65V93M711.5 44V65M712.5 31V44M713.5 26V31M714.5 28V33M715.5 33V49M716.5 48V72M717.5 72V101M718.5 101V133M719.5 133V163M720.5 163V188M721.5 188V200M722.5 200V206M723.5 191V202M724.5 169V191M725.5 139V169M726.5 107V139M727.5 77V107M728.5 52V77M729.5 36V52M730.5 29V36M731.5 26V31M732.5 31V41M733.5 41V60M734.5 60V87M735.5 87V118M736.5 118V149M737.5 149V178M738.5 178V197M739.5 197V205M740.5 199V206M741.5 180V199M742.5 153V180M743.5 122V153M744.5 91V122M745.5 64V91M746.5 43V64M747.5 31V43M748.5 26V31M749.5 28V35M750.5 35V49M751.5 49V73M752.5 73V103M753.5 103V134M754.5 134V164M755.5 164V188M756.5 188V201M757.5 201V206M758.5 190V202M759.5 167V190M760.5 138V167M761.5 106V138M762.5 76V106M763.5 52V76M764.5 35V52M765.5 28V35M766.5 26V30M767.5 30V42M768.5 42V61M769.5 61V88M770.5 88V119M771.5 119V150M772.5 150V178M773.5 178V198M774.5 198V205M775.5 199V206M776.5 179V199M777.5 153V179M778.5 121V153M779.5 90V121M780.5 63V90M781.5 42V63M782.5 31V42M783.5 26V31M784.5 28V34M785.5 34V50M786.5 50V74M787.5 74V104M788.5 104V136M789.5 136V166M790.5 166V189M791.5 189V201M792.5 201V206M793.5 189V201M794.5 166V189M795.5 136V166M796.5 104V136M797.5 75V104M798.5 50V75M799.5 34V50M800.5 28V34M801.5 26V31M802.5 31V43M803.5 43V62M804.5 62V90M805.5 90V120M806.5 120V152M807.5 152V179M808.5 179V197M809.5 197V205M810.5 198V206M811.5 178V199M812.5 151V178M813.5 120V151M814.5 89V120M815.5 62V89M816.5 43V62M817.5 30V43M818.5 26V30M819.5 28V35M820.5 35V51M821.5 51V75M822.5 75V105M823.5 105V137M824.5 137V167M825.5 167V189M826.5 189V202M827.5 200V206M828.5 189V200M829.5 165V189M830.5 135V165M831.5 103V135M832.5 74V103M833.5 50V74M834.5 35V50M835.5 28V35M836.5 26V31M837.5 31V43M838.5 43V63M839.5 63V90M840.5 90V121M841.5 121V153M842.5 153V180M843.5 180V197M844.5 197V206M845.5 197V205M846.5 178V198M847.5 150V178M848.5 118V150M849.5 87V118M850.5 61V87M851.5 41V61M852.5 31V41M853.5 26V31M854.5 28V37M855.5 37V52M856.5 52V76M857.5 76V106M858.5 106V138M859.5 138V168M860.5 168V191M861.5 191V202M862.5 201V206M863.5 187V201M864.5 163V187M865.5 134V163M866.5 102V134M867.5 73V102M868.5 49V73M869.5 34V49M870.5 28V34M871.5 26V32M872.5 32V44M873.5 44V64M874.5 64V92M875.5 92V123M876.5 123V153M877.5 153V181M878.5 181V198M879.5 198V206M880.5 196V204M881.5 177V196M882.5 149V177M883.5 117V149M884.5 86V117M885.5 60V86M886.5 41V60M887.5 30V41M888.5 26V30M889.5 28V36M890.5 36V54M891.5 54V77M892.5 77V108M893.5 108V140M894.5 140V169M895.5 169V192M896.5 192V202M897.5 201V205M898.5 186V201M899.5 163V186M900.5 133V163M901.5 101V133M902.5 72V101M903.5 48V72M904.5 33V48M905.5 28V33M906.5 26V31M907.5 31V45M908.5 45V65M909.5 65V93M910.5 93V108" stroke="#00ff00" stroke-width="1" fill="none" shape-rendering="crispEdges"/></svg>
<div class="t pl" style="right:930px;top:159px;line-height:16px;transform:scaleX(.9);transform-origin:100% 50%">50V</div>
<div class="t pl" style="right:930px;top:177px;line-height:16px;transform:scaleX(.9);transform-origin:100% 50%">40V</div>
<div class="t pl" style="right:930px;top:196px;line-height:16px;transform:scaleX(.9);transform-origin:100% 50%">30V</div>
<div class="t pl" style="right:930px;top:214px;line-height:16px;transform:scaleX(.9);transform-origin:100% 50%">20V</div>
<div class="t pl" style="right:930px;top:233px;line-height:16px;transform:scaleX(.9);transform-origin:100% 50%">10V</div>
<div class="t pl" style="right:930px;top:251px;line-height:16px;transform:scaleX(.9);transform-origin:100% 50%">0V</div>
<div class="t pl" style="right:930px;top:270px;line-height:16px;transform:scaleX(.9);transform-origin:100% 50%">-10V</div>
<div class="t pl" style="right:930px;top:288px;line-height:16px;transform:scaleX(.9);transform-origin:100% 50%">-20V</div>
<div class="t pl" style="right:930px;top:307px;line-height:16px;transform:scaleX(.9);transform-origin:100% 50%">-30V</div>
<div class="t pl" style="right:930px;top:325px;line-height:16px;transform:scaleX(.9);transform-origin:100% 50%">-40V</div>
<div class="t pl" style="right:930px;top:344px;line-height:16px;transform:scaleX(.9);transform-origin:100% 50%">-50V</div>
<div class="t pl" style="right:930px;top:362px;line-height:16px;transform:scaleX(.9);transform-origin:100% 50%">-60V</div>
<div class="t pl" style="left:30px;top:378px;width:60px;text-align:center;line-height:16px;transform:scaleX(.9)">0ms</div>
<div class="t pl" style="left:117px;top:378px;width:60px;text-align:center;line-height:16px;transform:scaleX(.9)">5ms</div>
<div class="t pl" style="left:205px;top:378px;width:60px;text-align:center;line-height:16px;transform:scaleX(.9)">10ms</div>
<div class="t pl" style="left:292px;top:378px;width:60px;text-align:center;line-height:16px;transform:scaleX(.9)">15ms</div>
<div class="t pl" style="left:380px;top:378px;width:60px;text-align:center;line-height:16px;transform:scaleX(.9)">20ms</div>
<div class="t pl" style="left:467px;top:378px;width:60px;text-align:center;line-height:16px;transform:scaleX(.9)">25ms</div>
<div class="t pl" style="left:554px;top:378px;width:60px;text-align:center;line-height:16px;transform:scaleX(.9)">30ms</div>
<div class="t pl" style="left:642px;top:378px;width:60px;text-align:center;line-height:16px;transform:scaleX(.9)">35ms</div>
<div class="t pl" style="left:729px;top:378px;width:60px;text-align:center;line-height:16px;transform:scaleX(.9)">40ms</div>
<div class="t pl" style="left:817px;top:378px;width:60px;text-align:center;line-height:16px;transform:scaleX(.9)">45ms</div>
<div class="t pl" style="left:904px;top:378px;width:60px;text-align:center;line-height:16px;transform:scaleX(.9)">50ms</div>
<div class="t" style="left:447px;top:149px;width:100px;text-align:center;font-size:14px;line-height:16px;color:#00ee00;transform:scaleX(.9)">V(out)</div>
<!-- schematic -->
<svg class="a sch" style="left:24px;top:438px" width="909" height="248" viewBox="24 438 909 248"><g shape-rendering="crispEdges" stroke-width="1"><path d="M123.5 561V532.5H146" stroke="#0000ff" fill="none"/><path d="M173 532.5H245" stroke="#0000ff" fill="none"/><path d="M201.5 532V561" stroke="#0000ff" fill="none"/><path d="M201.5 596V638" stroke="#0000ff" fill="none"/><path d="M123.5 594V638" stroke="#0000ff" fill="none"/><path d="M266.5 510V482.5H322.5V545" stroke="#0000ff" fill="none"/><path d="M322 532.5H345" stroke="#0000ff" fill="none"/><path d="M372 532.5H408" stroke="#0000ff" fill="none"/><path d="M386.5 532V561" stroke="#0000ff" fill="none"/><path d="M386.5 596V638" stroke="#0000ff" fill="none"/><path d="M322.5 581V631" stroke="#0000ff" fill="none"/><path d="M251.5 552V581" stroke="#0000ff" fill="none"/><path d="M251 574.5H287.5V589" stroke="#0000ff" fill="none"/><path d="M287.5 617V638" stroke="#0000ff" fill="none"/><path d="M251.5 617V638" stroke="#0000ff" fill="none"/><rect x="199" y="530" width="5" height="5" fill="#0000ff"/><rect x="320" y="530" width="5" height="5" fill="#0000ff"/><rect x="384" y="530" width="5" height="5" fill="#0000ff"/><rect x="249" y="572" width="5" height="5" fill="#0000ff"/><path d="M115 638.5H132 M115.5 638.5L123.5 646.5L131.5 638.5" stroke="#0000ff" fill="none"/><path d="M193 638.5H210 M193.5 638.5L201.5 646.5L209.5 638.5" stroke="#0000ff" fill="none"/><path d="M243 638.5H260 M243.5 638.5L251.5 646.5L259.5 638.5" stroke="#0000ff" fill="none"/><path d="M279 638.5H296 M279.5 638.5L287.5 646.5L295.5 638.5" stroke="#0000ff" fill="none"/><path d="M378 638.5H395 M378.5 638.5L386.5 646.5L394.5 638.5" stroke="#0000ff" fill="none"/><path d="M443 638.5H460 M443.5 638.5L451.5 646.5L459.5 638.5" stroke="#0000ff" fill="none"/><path d="M146 532.5H157 M161 532.5H173 M157.5 524V540 M161.5 524V540" stroke="#000080" fill="none"/><path d="M345 532.5H356 M360 532.5H372 M356.5 524V540 M360.5 524V540" stroke="#000080" fill="none"/><path d="M287.5 589V601 M287.5 605V617 M280 601.5H296 M280 604.5H296" stroke="#000080" fill="none"/><path d="M201.5 560.2V563.8L208.6 567.4L194.4 574.5L208.6 581.6L194.4 588.8L201.5 592.3V595.9" stroke="#000080" fill="none"/><path d="M386.5 560.2V563.8L393.6 567.4L379.4 574.5L393.6 581.6L379.4 588.8L386.5 592.3V595.9" stroke="#000080" fill="none"/><path d="M322.5 545.8V549.4L329.6 553.0L315.4 560.1L329.6 567.2L315.4 574.4L322.5 577.9V581.5" stroke="#000080" fill="none"/><path d="M251.5 582.0V585.6L258.6 589.2L244.4 596.3L258.6 603.4L244.4 610.6L251.5 614.1V617.7" stroke="#000080" fill="none"/><path d="M123.5 561V570 M123.5 591V594 M121 567.5H126 M121 588.5H126" stroke="#000080" fill="none"/><circle cx="123" cy="578" r="13.5" stroke="#000080" fill="none"/><path d="M113.5 579.5Q113.5 572.5 118 572.5Q123 572.5 123.5 578Q124 583.5 129 583.5Q134.5 583.5 134.5 577" stroke="#000080" fill="none"/><circle cx="266" cy="531.5" r="21.3" stroke="#000080" fill="none"/><path d="M266.5 510V524 M257.5 524.5H275.5V527.5H257.5Z" stroke="#000080" fill="none"/><path d="M245 532.5H253 M256 532.5H261 M265 532.5H270 M274 532.5H279 M283 532.5H286" stroke="#000080" fill="none"/><path d="M251.5 552V542L253.5 540.5H279.5L281.5 542.5 M254.5 539.5L256.5 537.5H277L279 539.5" stroke="#000080" fill="none"/><path d="M451.5 603V612 M436 612.5H466 M436 622.5H466 M443.5 615.5H458.5V619.5H443.5Z M443.5 626.5H458.5V629.5H443.5Z M451.5 630V638 M442 606.5H446 M443.5 604V609" stroke="#000080" fill="none"/></g><text x="153.1" y="520.7" textLength="11.87" lengthAdjust="spacingAndGlyphs">C2</text><text x="147.0" y="547.6" textLength="23.07" lengthAdjust="spacingAndGlyphs">0.01u</text><text x="134.4" y="562.7" textLength="9.75" lengthAdjust="spacingAndGlyphs">V1</text><text x="134.2" y="601.7" textLength="54.5" lengthAdjust="spacingAndGlyphs">SINE(0 1 1K)</text><text x="134.2" y="612.7" textLength="20.07" lengthAdjust="spacingAndGlyphs">AC 1</text><text x="210.7" y="573.4" textLength="11.42" lengthAdjust="spacingAndGlyphs">R3</text><text x="210.7" y="589.6" textLength="19.38" lengthAdjust="spacingAndGlyphs">470k</text><text x="269.2" y="505.7" textLength="11.46" lengthAdjust="spacingAndGlyphs">U1</text><text x="255.7" y="562.8" textLength="24.95" lengthAdjust="spacingAndGlyphs">12AX7</text><text x="260.0" y="594.6" textLength="11.16" lengthAdjust="spacingAndGlyphs">R1</text><text x="260.0" y="610.6" textLength="9.46" lengthAdjust="spacingAndGlyphs">2k</text><text x="290.4" y="594.6" textLength="11.57" lengthAdjust="spacingAndGlyphs">C4</text><text x="291.0" y="615.5" textLength="18.96" lengthAdjust="spacingAndGlyphs">100u</text><text x="331.4" y="558.6" textLength="11.42" lengthAdjust="spacingAndGlyphs">R2</text><text x="331.4" y="574.6" textLength="19.38" lengthAdjust="spacingAndGlyphs">100k</text><text x="352.2" y="520.6" textLength="11.87" lengthAdjust="spacingAndGlyphs">C3</text><text x="346.0" y="547.6" textLength="22.97" lengthAdjust="spacingAndGlyphs">0.01u</text><text x="408.4" y="534.9" textLength="14.01" lengthAdjust="spacingAndGlyphs">Out</text><text x="395.7" y="573.4" textLength="11.42" lengthAdjust="spacingAndGlyphs">R4</text><text x="395.5" y="589.7" textLength="19.07" lengthAdjust="spacingAndGlyphs">470k</text><text x="461.0" y="605.7" textLength="11.27" lengthAdjust="spacingAndGlyphs">V2</text><text x="461.0" y="644.7" textLength="20.16" lengthAdjust="spacingAndGlyphs">200V</text><text x="108.9" y="670.5" textLength="39.27" lengthAdjust="spacingAndGlyphs">.tran 0.05</text><text x="107.6" y="678.5" textLength="77.47" lengthAdjust="spacingAndGlyphs">;ac oct 5 20 20000</text><text transform="translate(325.4 648.4) rotate(-90)" style="font-size:12px" textLength="17.4" lengthAdjust="spacingAndGlyphs">Vcc</text><text transform="translate(454.4 603.2) rotate(-90)" style="font-size:12px" textLength="17.4" lengthAdjust="spacingAndGlyphs">Vcc</text></svg>
</body>
</html>
